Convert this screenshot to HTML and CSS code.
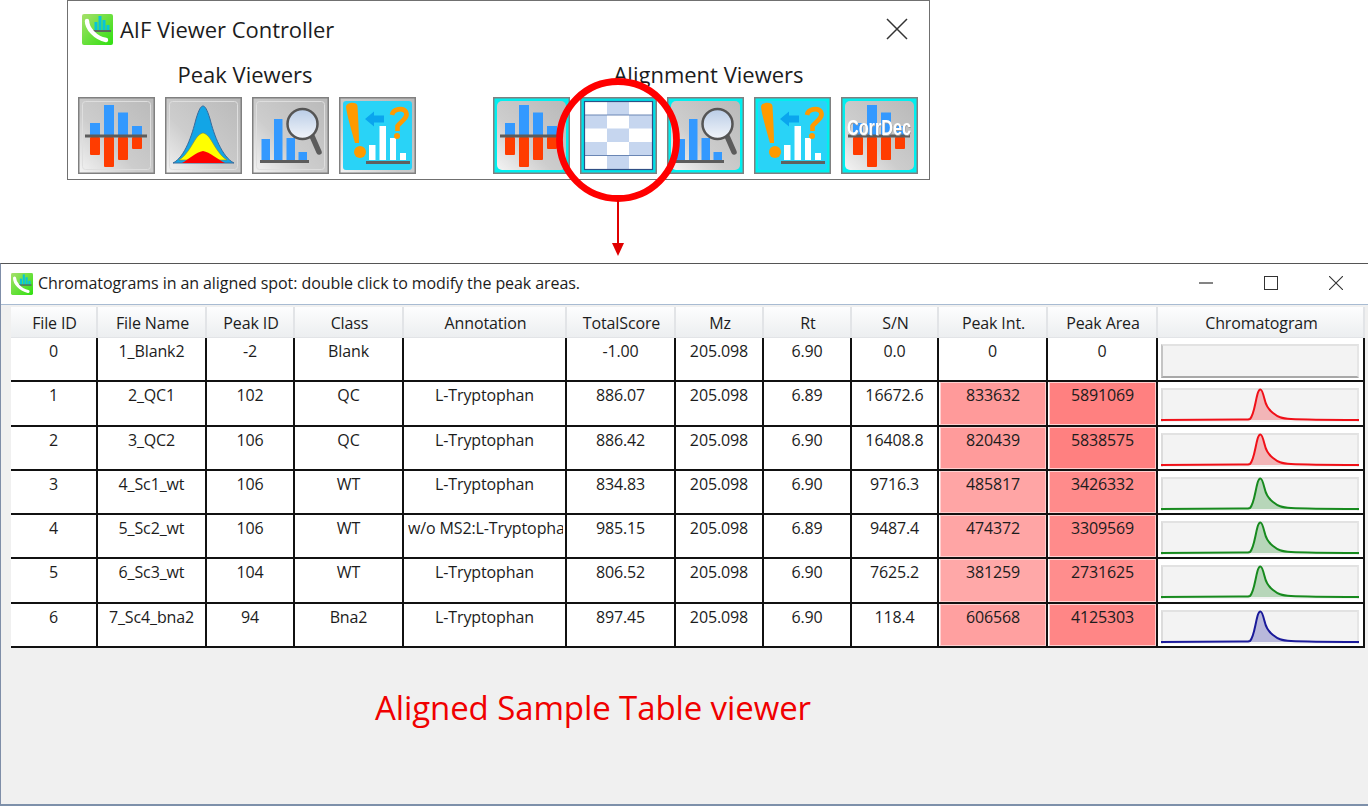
FILE: index.html
```html
<!DOCTYPE html>
<html lang="en">
<head>
<meta charset="utf-8">
<title>Aligned Sample Table viewer</title>
<link rel="stylesheet" href="styles.css">
</head>
<body>
<svg class="defs" width="0" height="0" aria-hidden="true">
  <defs>
    <linearGradient id="metal" x1="1" y1="0" x2="0" y2="1">
      <stop offset="0" stop-color="#b9b9b9"/><stop offset=".6" stop-color="#cdcdcd"/><stop offset="1" stop-color="#f4f4f4"/>
    </linearGradient>
    <linearGradient id="lens" x1="0" y1="0" x2="0" y2="1">
      <stop offset="0" stop-color="#b9cce6"/><stop offset="1" stop-color="#f2f5fa"/>
    </linearGradient>
    <linearGradient id="appgreen" x1="0" y1="0" x2="1" y2="1">
      <stop offset="0" stop-color="#a6e06a"/><stop offset="1" stop-color="#2fe010"/>
    </linearGradient>
    <symbol id="frame-gray" viewBox="0 0 77 77">
      <rect x=".75" y=".75" width="75.5" height="75.5" fill="url(#metal)" stroke="#808080" stroke-width="1.5"/>
      <rect x="4.5" y="4.5" width="68" height="68" rx="3" fill="none" stroke="#dedede"/>
    </symbol>
    <symbol id="frame-cyan" viewBox="0 0 77 77">
      <rect x=".75" y=".75" width="75.5" height="75.5" fill="#00efef" stroke="#808080" stroke-width="1.5"/>
      <rect x="4" y="4" width="69" height="69" rx="5" fill="url(#metal)"/>
    </symbol>
    <symbol id="bars" viewBox="0 0 77 77">
      <g fill="#3399ff">
        <rect x="12" y="26" width="10" height="13"/><rect x="26" y="8" width="10" height="31"/><rect x="40" y="15.5" width="10" height="23.5"/><rect x="54" y="29" width="10" height="10"/>
      </g>
      <g fill="#ff3c00">
        <rect x="12" y="40" width="10" height="18" rx="1"/><rect x="26" y="40" width="10" height="30" rx="1"/><rect x="40" y="40" width="10" height="23" rx="1"/><rect x="54" y="40" width="10" height="12" rx="1"/>
      </g>
      <rect x="7" y="37.5" width="62" height="3" fill="#5c5c5c"/>
    </symbol>
    <symbol id="peak" viewBox="0 0 77 77">
      <path d="M8 66C20 60 27 38 31 22C34 12 36 9 38 9C40 9 42 12 45 22C49 38 57 60 69 66Z" fill="#12a5e6" stroke="#3a6a9a"/>
      <path d="M14 63C23 58 29 43 33 39C35 37 37 36 38 36C39 36 41 37 43 39C47 43 53 58 62 63Z" fill="#ffff00" stroke="#8a8a30" stroke-width=".6"/>
      <path d="M17 66C24 62 31 55 38 54C45 55 52 62 60 66Z" fill="#ff0000"/>
    </symbol>
    <symbol id="search" viewBox="0 0 77 77">
      <g fill="#3399ff">
        <rect x="9.5" y="42" width="8.5" height="21"/><rect x="22" y="22" width="8.5" height="41"/><rect x="34.5" y="41" width="8.5" height="22"/><rect x="46.5" y="55" width="8.5" height="8"/>
      </g>
      <rect x="8" y="63" width="49" height="3" fill="#5c5c5c"/>
      <path d="M60 39L67 55" stroke="#5c5c5c" stroke-width="5.5" stroke-linecap="round"/>
      <circle cx="50.5" cy="27" r="15" fill="url(#lens)" stroke="#555" stroke-width="2.5"/>
    </symbol>
    <symbol id="info" viewBox="0 0 77 77">
      <rect x="4" y="4" width="69" height="69" rx="3" fill="#29d3f7"/>
      <g fill="#ffffff">
        <rect x="30" y="48" width="6.5" height="15"/><rect x="40.5" y="29" width="6.5" height="34"/><rect x="51" y="41" width="6" height="22"/><rect x="61" y="56" width="6" height="7"/>
      </g>
      <rect x="27" y="64" width="44" height="3" fill="#606060"/>
      <path d="M7 10C7 5 18 4 18.5 9C19 18 20 34 20 46L16 46C12 32 8 18 7 10Z" fill="#ff9a00"/>
      <circle cx="21" cy="55" r="6" fill="#ff9a00"/>
      <path d="M26 22L35 14.5V18.5H45V25.5H35V29.5Z" fill="#0aa5ee"/>
      <path d="M53 18C54 12 64 10 67 15C70 21 60 26 58.5 29V34" fill="none" stroke="#ff9a00" stroke-width="4.6"/>
      <circle cx="58" cy="39" r="3" fill="#ff9a00"/>
    </symbol>
    <symbol id="grid" viewBox="0 0 77 77">
      <rect x=".75" y=".75" width="75.5" height="75.5" fill="#00dfe6" stroke="#808080" stroke-width="1.5"/>
      <rect x="4.5" y="4.5" width="68" height="68" fill="#fff"/>
      <g fill="#c6d6ef">
        <rect x="27" y="5" width="22" height="13"/><rect x="5" y="18" width="22" height="13.5"/><rect x="49" y="18" width="23" height="13.5"/><rect x="27" y="31.5" width="22" height="13.5"/><rect x="5" y="45" width="22" height="13.5"/><rect x="49" y="45" width="23" height="13.5"/><rect x="27" y="58.5" width="22" height="13.5"/>
      </g>
      <path d="M5 18H72M5 58.5H72" stroke="#6a86b4" stroke-width="1" fill="none"/>
      <rect x="4.5" y="4.5" width="68" height="68" fill="none" stroke="#2f4f85" stroke-width="1.2"/>
    </symbol>
    <symbol id="appicon" viewBox="0 0 31 31">
      <rect width="31" height="31" rx="2" fill="url(#appgreen)"/>
      <g fill="#08c4d8">
        <rect x="12.5" y="8" width="3" height="9"/><rect x="16.5" y="2" width="3" height="15"/><rect x="20.5" y="6" width="3" height="11"/><rect x="24.5" y="11" width="3" height="6"/>
      </g>
      <rect x="11" y="16" width="18" height="2" fill="#5a6a5a"/>
      <path d="M5 7C5 14 13 24 24 26" fill="none" stroke="#fff" stroke-width="4.4" stroke-linecap="round"/>
    </symbol>
    <symbol id="chrom" viewBox="0 0 198 34" preserveAspectRatio="none">
      <path d="M0 32L78 31.6C84 31.5 87 32 89 31C93 27 94 15 96.5 6C97.5 2.5 98.5 1.5 99.5 1.5C101 1.5 102 5 103.5 11C105 18 108 22 112 25C117 29 120 30.5 130 31C140 31.5 150 31.8 198 32Z" fill="currentColor" fill-opacity=".27" stroke="none"/>
      <path d="M0 32L78 31.6C84 31.5 87 32 89 31C93 27 94 15 96.5 6C97.5 2.5 98.5 1.5 99.5 1.5C101 1.5 102 5 103.5 11C105 18 108 22 112 25C117 29 120 30.5 130 31C140 31.5 150 31.8 198 32" fill="none" stroke="currentColor" stroke-width="2"/>
    </symbol>
  </defs>
</svg>

<main class="canvas">
  <section class="controller">
    <header class="ctl-title">
      <svg class="ctl-icon"><use href="#appicon"/></svg>
      <span class="ctl-name">AIF Viewer Controller</span>
      <svg class="ctl-close" viewBox="0 0 22 22"><path d="M1 1L21 21M21 1L1 21" stroke="#333" stroke-width="1.5" fill="none"/></svg>
    </header>
    <div class="groups">
      <div class="group group-peak">
        <h2 class="group-label">Peak Viewers</h2>
        <div class="buttons">
          <svg class="tool" viewBox="0 0 77 77"><use href="#frame-gray"/><use href="#bars"/></svg>
          <svg class="tool" viewBox="0 0 77 77"><use href="#frame-gray"/><use href="#peak"/></svg>
          <svg class="tool" viewBox="0 0 77 77"><use href="#frame-gray"/><use href="#search"/></svg>
          <svg class="tool" viewBox="0 0 77 77"><use href="#frame-gray"/><use href="#info"/></svg>
        </div>
      </div>
      <div class="group group-align">
        <h2 class="group-label">Alignment Viewers</h2>
        <div class="buttons">
          <svg class="tool" viewBox="0 0 77 77"><use href="#frame-cyan"/><use href="#bars"/></svg>
          <svg class="tool" viewBox="0 0 77 77"><use href="#grid"/></svg>
          <svg class="tool" viewBox="0 0 77 77"><use href="#frame-cyan"/><use href="#search"/></svg>
          <svg class="tool" viewBox="0 0 77 77"><use href="#frame-cyan"/><use href="#info"/></svg>
          <svg class="tool" viewBox="0 0 77 77"><use href="#frame-cyan"/><use href="#bars"/><text class="corrdec-shadow" x="38.5" y="38.5" text-anchor="middle" textLength="64" lengthAdjust="spacingAndGlyphs">CorrDec</text><text class="corrdec" x="38" y="38" text-anchor="middle" textLength="64" lengthAdjust="spacingAndGlyphs">CorrDec</text></svg>
        </div>
      </div>
    </div>
  </section>

  <section class="window">
    <header class="win-title">
      <svg class="win-icon"><use href="#appicon"/></svg>
      <span class="win-name">Chromatograms in an aligned spot: double click to modify the peak areas.</span>
      <div class="win-controls">
        <span class="win-btn"><svg viewBox="0 0 14 14"><path d="M0 7H14" stroke="#333" stroke-width="1.2"/></svg></span>
        <span class="win-btn"><svg viewBox="0 0 14 14"><rect x=".5" y=".5" width="13" height="13" fill="none" stroke="#333"/></svg></span>
        <span class="win-btn"><svg viewBox="0 0 14 14"><path d="M0 0L14 14M14 0L0 14" stroke="#333" stroke-width="1.1"/></svg></span>
      </div>
    </header>
    <div class="win-body">
      <div class="table">
        <div class="th">File ID</div><div class="th">File Name</div><div class="th">Peak ID</div><div class="th">Class</div><div class="th">Annotation</div><div class="th">TotalScore</div><div class="th">Mz</div><div class="th">Rt</div><div class="th">S/N</div><div class="th">Peak Int.</div><div class="th">Peak Area</div><div class="th">Chromatogram</div>

        <div class="td">0</div><div class="td">1_Blank2</div><div class="td">-2</div><div class="td">Blank</div><div class="td"></div><div class="td">-1.00</div><div class="td">205.098</div><div class="td">6.90</div><div class="td">0.0</div><div class="td">0</div><div class="td">0</div>
        <div class="td td-chart"><div class="chart chart-empty"></div></div>

        <div class="td">1</div><div class="td">2_QC1</div><div class="td">102</div><div class="td">QC</div><div class="td">L-Tryptophan</div><div class="td">886.07</div><div class="td">205.098</div><div class="td">6.89</div><div class="td">16672.6</div>
        <div class="td td-heat"><div class="heat" style="background-color:#ff9a9a">833632</div></div><div class="td td-heat"><div class="heat" style="background-color:#ff8080">5891069</div></div>
        <div class="td td-chart"><div class="chart qc"><svg><use href="#chrom"/></svg></div></div>

        <div class="td">2</div><div class="td">3_QC2</div><div class="td">106</div><div class="td">QC</div><div class="td">L-Tryptophan</div><div class="td">886.42</div><div class="td">205.098</div><div class="td">6.90</div><div class="td">16408.8</div>
        <div class="td td-heat"><div class="heat" style="background-color:#ff9b9b">820439</div></div><div class="td td-heat"><div class="heat" style="background-color:#ff8080">5838575</div></div>
        <div class="td td-chart"><div class="chart qc"><svg><use href="#chrom"/></svg></div></div>

        <div class="td">3</div><div class="td">4_Sc1_wt</div><div class="td">106</div><div class="td">WT</div><div class="td">L-Tryptophan</div><div class="td">834.83</div><div class="td">205.098</div><div class="td">6.90</div><div class="td">9716.3</div>
        <div class="td td-heat"><div class="heat" style="background-color:#ffa5a5">485817</div></div><div class="td td-heat"><div class="heat" style="background-color:#ff8b8b">3426332</div></div>
        <div class="td td-chart"><div class="chart wt"><svg><use href="#chrom"/></svg></div></div>

        <div class="td">4</div><div class="td">5_Sc2_wt</div><div class="td">106</div><div class="td">WT</div><div class="td td-clip"><span class="clip-text">w/o MS2:L-Tryptophan</span></div><div class="td">985.15</div><div class="td">205.098</div><div class="td">6.89</div><div class="td">9487.4</div>
        <div class="td td-heat"><div class="heat" style="background-color:#ffa5a5">474372</div></div><div class="td td-heat"><div class="heat" style="background-color:#ff8b8b">3309569</div></div>
        <div class="td td-chart"><div class="chart wt"><svg><use href="#chrom"/></svg></div></div>

        <div class="td">5</div><div class="td">6_Sc3_wt</div><div class="td">104</div><div class="td">WT</div><div class="td">L-Tryptophan</div><div class="td">806.52</div><div class="td">205.098</div><div class="td">6.90</div><div class="td">7625.2</div>
        <div class="td td-heat"><div class="heat" style="background-color:#ffa8a8">381259</div></div><div class="td td-heat"><div class="heat" style="background-color:#ff8d8d">2731625</div></div>
        <div class="td td-chart"><div class="chart wt"><svg><use href="#chrom"/></svg></div></div>

        <div class="td">6</div><div class="td">7_Sc4_bna2</div><div class="td">94</div><div class="td">Bna2</div><div class="td">L-Tryptophan</div><div class="td">897.45</div><div class="td">205.098</div><div class="td">6.90</div><div class="td">118.4</div>
        <div class="td td-heat"><div class="heat" style="background-color:#ffa0a0">606568</div></div><div class="td td-heat"><div class="heat" style="background-color:#ff8686">4125303</div></div>
        <div class="td td-chart"><div class="chart bna"><svg><use href="#chrom"/></svg></div></div>
      </div>
      <p class="caption">Aligned Sample Table viewer</p>
    </div>
  </section>

  <svg class="callout" viewBox="0 0 140 190" aria-hidden="true">
    <circle cx="70" cy="62" r="58.5" fill="none" stroke="#ff0000" stroke-width="6.8"/>
    <path d="M70 122V166" stroke="#e00000" stroke-width="2"/>
    <path d="M64 165H76L70 178Z" fill="#e00000"/>
  </svg>
</main>
</body>
</html>
```
FILE: styles.css
```css
* { box-sizing: border-box; }
html, body { margin: 0; padding: 0; background: #fff; }
body { font-family: "Open Sans", "Noto Sans", "Liberation Sans", sans-serif; color: #1c1c1c; }
.defs { position: absolute; }
.canvas { position: relative; width: 1368px; height: 807px; overflow: hidden; background: #fff; }

/* controller window */
.controller {
  position: absolute; left: 67px; top: 0; width: 863px; height: 180px;
  border: 1.5px solid #707070; background: #fff; padding: 11px 0 0 10px;
}
.ctl-title { display: flex; align-items: center; height: 34px; padding-left: 4px; }
.ctl-icon { width: 31px; height: 31px; flex: none; }
.ctl-name { margin-left: 7px; font-size: 22px; line-height: 34px; letter-spacing: -.05px; }
.ctl-close { width: 22px; height: 22px; margin-left: auto; margin-right: 21px; margin-top: -1px; }
.groups { display: flex; gap: 77px; margin-top: 13px; }
.group-peak { width: 338px; }
.group-align { width: 425px; }
.group-label { margin: 0 0 8px; height: 30px; font-size: 22px; line-height: 30px; font-weight: 400; text-align: center; }
.group-peak .group-label { padding-right: 4px; }
.group-align .group-label { padding-left: 6px; }
.buttons { display: flex; justify-content: space-between; }
.tool { width: 77px; height: 77px; flex: none; filter: blur(.45px); }
.corrdec { font: 700 22px "Liberation Sans", sans-serif; fill: #fff; }
.corrdec-shadow { font: 700 22px "Liberation Sans", sans-serif; fill: #9a9a9a; }

/* table window */
.window {
  position: absolute; left: 0; top: 263px; width: 1368px; height: 543px;
  border-top: 1px solid #555; border-left: 1.5px solid #7f8ea8; border-bottom: 2px solid #7d90aa;
  background: #fff; display: flex; flex-direction: column;
}
.win-title { display: flex; align-items: center; height: 40px; flex: none; padding-left: 10px; }
.win-icon { width: 22px; height: 22px; flex: none; margin-top: -1px; }
.win-name { margin-left: 5px; margin-top: -2px; font-size: 16px; line-height: 20px; letter-spacing: -.08px; }
.win-controls { display: flex; margin-left: auto; }
.win-btn { width: 65px; height: 40px; display: flex; align-items: center; justify-content: center; margin-top: -2px; }
.win-btn svg { width: 14px; height: 14px; }
.win-body { flex: 1; background: #f0f0f0; border-top: 1.5px solid #a8bbd2; padding: 2px 0 0 10px; }

.table {
  display: grid; width: 1354px;
  grid-template-columns: 87px 109px 88px 109px 163px 109px 88px 88px 87px 109px 110px 207px;
  grid-template-rows: 31px repeat(7, 44.29px);
  font-size: 16px; line-height: 20px; letter-spacing: -.12px;
}
.th {
  text-align: center; line-height: 32px; padding-left: 2px;
  background: linear-gradient(#fdfdfe, #eceef0);
  border-right: 2px solid #e2e4e7; border-bottom: 1px solid #e2e4e7;
}
.td {
  background: #fff; text-align: center; padding-top: 3px; white-space: nowrap; overflow: hidden;
  border-right: 2px solid #111; border-bottom: 2px solid #111;
}
.td-clip { text-align: left; padding-left: 4px; padding-right: 2px; }
.clip-text { display: block; overflow: hidden; }
.td-heat { padding: 0; }
.heat { height: 100%; padding-top: 2px; border: 1px solid #ffd0d0; margin: 0 0 0 1px; }
.td-chart { padding: 6px 5px 2px 3px; }
.chart {
  height: 34px; width: 198px; background: #f3f3f3;
  border-top: 2px solid #e2e2e2; border-left: 2px solid #dcdcdc; border-right: 2px solid #e6e6e6;
  position: relative;
}
.chart svg { display: block; position: absolute; left: -2px; top: -2px; width: 198px; height: 34px; }
.chart-empty { border-bottom: 2px solid #a8a8a8; border-left-color: #c4c4c4; }
.qc { color: #f01018; }
.wt { color: #178a1e; }
.bna { color: #1a1a9a; }

.caption { margin: 39px 0 0 364px; font-size: 33px; line-height: 42px; color: #f00000; letter-spacing: -.1px; }

/* red callout drawn over the toolbar */
.callout { position: absolute; left: 548px; top: 78px; width: 140px; height: 190px; }
```
